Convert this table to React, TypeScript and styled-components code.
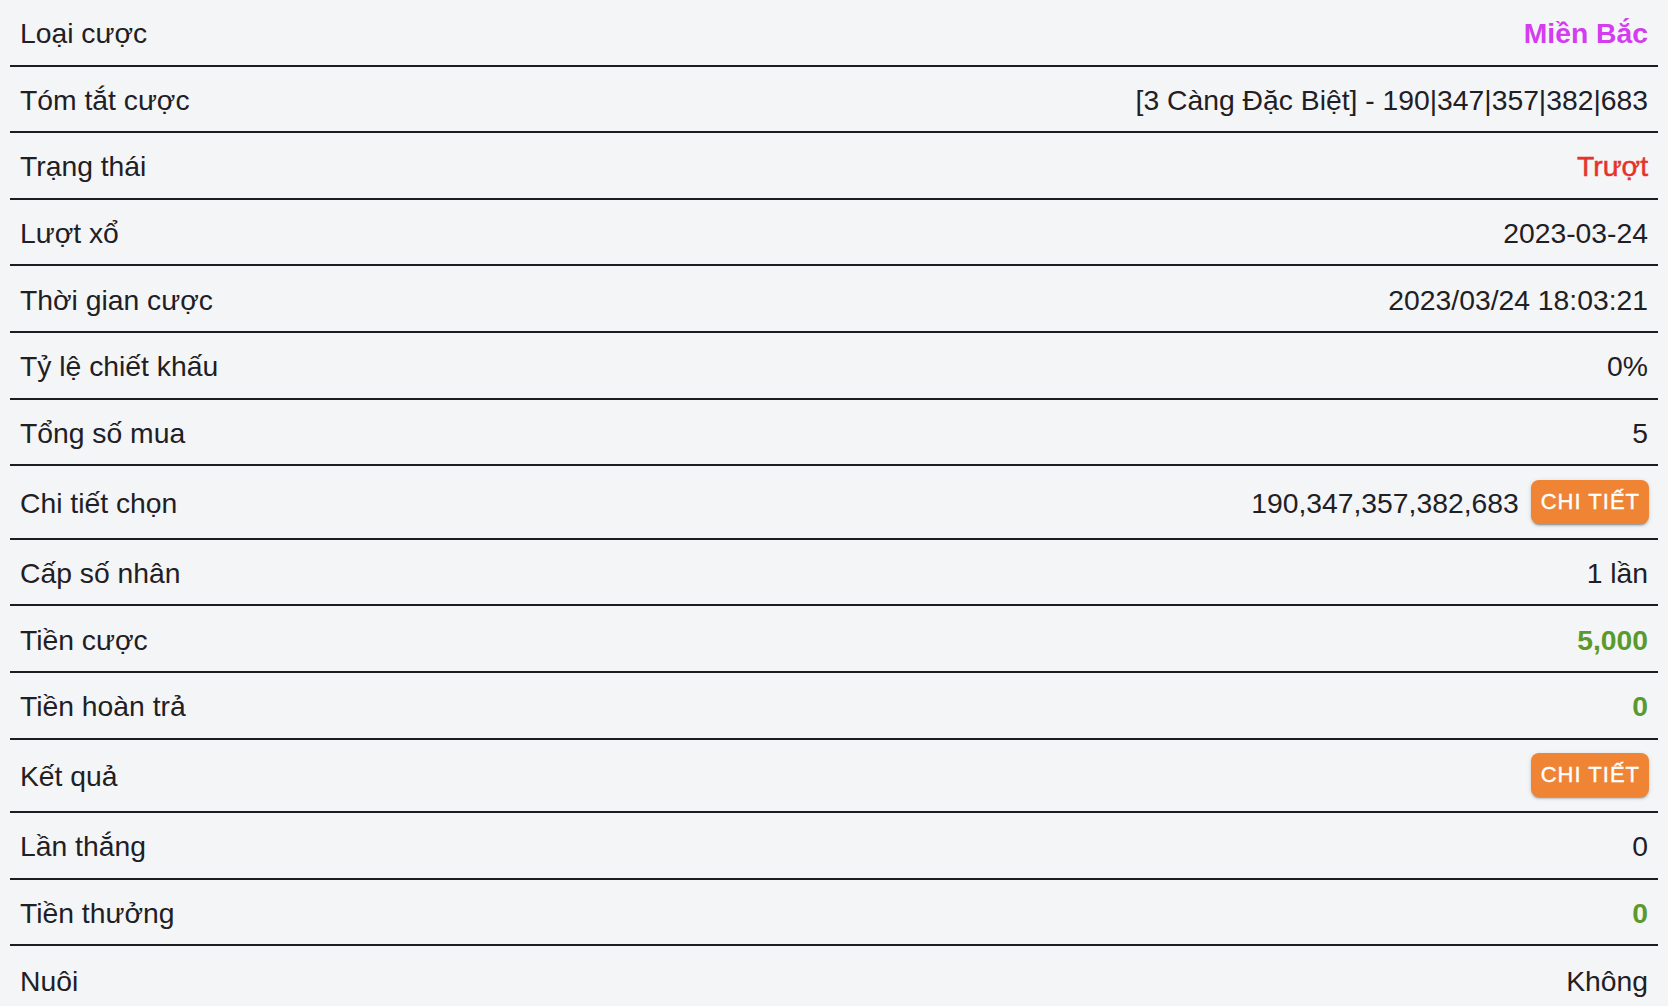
import React from "react";
import styled, { createGlobalStyle } from "styled-components";

const GlobalStyle = createGlobalStyle`
  html, body {
    margin: 0;
    padding: 0;
    background: #f4f5f7;
  }
  body {
    font-family: "Liberation Sans", Arial, Helvetica, sans-serif;
    color: #1e2025;
  }
`;

const Table = styled.div`
  display: flex;
  flex-direction: column;
  padding: 0 10px;
  background: #f4f5f7;
`;

const Row = styled.div<{ $tall?: boolean; $last?: boolean }>`
  display: flex;
  align-items: center;
  justify-content: space-between;
  box-sizing: border-box;
  min-height: ${(p) => (p.$tall ? "73.6px" : "66.6px")};
  padding: 2px 10px 0 10px;
  border-bottom: ${(p) => (p.$last ? "none" : "2px solid #1c1d22")};
  font-size: 28.3px;
  line-height: 34px;
`;

const Label = styled.span`
  color: #1e2025;
`;

type Tone = "plain" | "magenta" | "red" | "green";

const toneColor: Record<Tone, string> = {
  plain: "#1e2025",
  magenta: "#d43cf0",
  red: "#e5332a",
  green: "#5a9a2c",
};

const Value = styled.span<{ $tone?: Tone; $bold?: boolean; $medium?: boolean }>`
  display: flex;
  align-items: center;
  gap: 12px;
  color: ${(p) => toneColor[p.$tone || "plain"]};
  font-weight: ${(p) => (p.$bold ? 700 : 400)};
  -webkit-text-stroke: ${(p) => (p.$medium ? "0.5px" : "0")};
  text-align: right;
`;

const DetailButton = styled.button`
  height: 44px;
  margin: -2px -1px 0 0;
  padding: 0 9px 0 10px;
  border: none;
  border-radius: 8px;
  background: #ee8434;
  color: #ffffff;
  font-family: "Liberation Sans", Arial, sans-serif;
  font-size: 22px;
  letter-spacing: 1px;
  text-transform: uppercase;
  -webkit-text-stroke: 0.4px #ffffff;
  box-shadow: 0 3px 1px -2px rgba(0, 0, 0, 0.2), 0 2px 2px 0 rgba(0, 0, 0, 0.14),
    0 1px 5px 0 rgba(0, 0, 0, 0.12);
  cursor: pointer;
`;

type Item = {
  label: string;
  value?: string;
  tone?: Tone;
  bold?: boolean;
  medium?: boolean;
  button?: boolean;
};

const items: Item[] = [
  { label: "Loại cược", value: "Miền Bắc", tone: "magenta", bold: true },
  { label: "Tóm tắt cược", value: "[3 Càng Đặc Biệt] - 190|347|357|382|683" },
  { label: "Trạng thái", value: "Trượt", tone: "red", medium: true },
  { label: "Lượt xổ", value: "2023-03-24" },
  { label: "Thời gian cược", value: "2023/03/24 18:03:21" },
  { label: "Tỷ lệ chiết khấu", value: "0%" },
  { label: "Tổng số mua", value: "5" },
  { label: "Chi tiết chọn", value: "190,347,357,382,683", button: true },
  { label: "Cấp số nhân", value: "1 lần" },
  { label: "Tiền cược", value: "5,000", tone: "green", bold: true },
  { label: "Tiền hoàn trả", value: "0", tone: "green", bold: true },
  { label: "Kết quả", button: true },
  { label: "Lần thắng", value: "0" },
  { label: "Tiền thưởng", value: "0", tone: "green", bold: true },
  { label: "Nuôi", value: "Không" },
];

export default function App() {
  return (
    <>
      <GlobalStyle />
      <Table>
        {items.map((it, i) => (
          <Row key={it.label} $tall={it.button} $last={i === items.length - 1}>
            <Label>{it.label}</Label>
            <Value $tone={it.tone} $bold={it.bold} $medium={it.medium}>
              {it.value && <span>{it.value}</span>}
              {it.button && <DetailButton>Chi tiết</DetailButton>}
            </Value>
          </Row>
        ))}
      </Table>
    </>
  );
}
